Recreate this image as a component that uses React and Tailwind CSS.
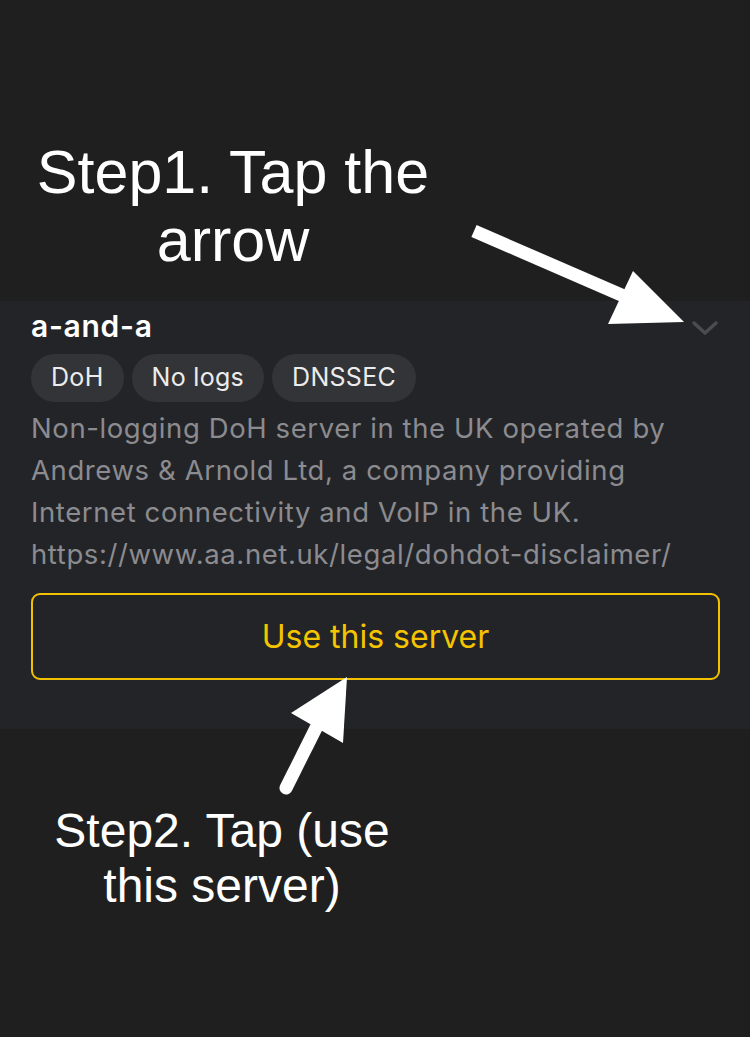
export default function App() {
  const tags = ['DoH', 'No logs', 'DNSSEC']

  return (
    <div className="relative w-[750px] h-[1037px] bg-[#1f1f1f] overflow-hidden font-['Inter',sans-serif]">
      {/* Step 1 annotation */}
      <div className="h-[301px] pt-[138px]">
        <div className="w-[466px] text-center text-white text-[61px] leading-[68px] font-['Liberation_Sans',Arial,sans-serif]">
          Step1. Tap the
          <br />
          arrow
        </div>
      </div>

      {/* Server card */}
      <div className="bg-[#232427] pl-[31px] pr-[30px] pt-[9px] pb-[49px]">
        <div className="flex items-center justify-between">
          <div className="text-white text-[30px] leading-[33px] font-semibold tracking-[0.7px]">a-and-a</div>
          <svg width="28" height="18" viewBox="0 0 28 18" className="mr-[1px] mt-[2px]">
            <path d="M3 4 L14 14 L25 4" fill="none" stroke="#4b4c50" strokeWidth="3.5" strokeLinecap="round" strokeLinejoin="round" />
          </svg>
        </div>

        <div className="flex gap-2 mt-[11px]">
          {tags.map((t) => (
            <span key={t} className="h-[48px] px-[20px] rounded-full bg-[#333437] text-[#ececec] text-[25px] tracking-[0.3px] flex items-center">
              {t}
            </span>
          ))}
        </div>

        <p className="mt-[5px] text-[#8b8b90] text-[27.5px] leading-[42px] tracking-[0.6px]">
          Non-logging DoH server in the UK operated by
          <br />
          Andrews &amp; Arnold Ltd, a company providing
          <br />
          Internet connectivity and VoIP in the UK.
          <br />
          https://www.aa.net.uk/legal/dohdot-disclaimer/
        </p>

        <button className="mt-[18px] w-[689px] h-[87px] rounded-[9px] border-2 border-[#f2c200] text-[#f5c400] text-[32px] flex items-center justify-center">
          Use this server
        </button>
      </div>

      {/* Step 2 annotation */}
      <div className="mt-[74px] w-[444px] text-center text-white text-[48px] leading-[55px] font-['Liberation_Sans',Arial,sans-serif]">
        Step2. Tap (use
        <br />
        this server)
      </div>

      {/* Arrows drawn over the content */}
      <svg className="absolute inset-0 pointer-events-none" width="750" height="1037" viewBox="0 0 750 1037">
        <line x1="474" y1="231" x2="626" y2="297" stroke="#fff" strokeWidth="13" />
        <polygon points="608,324 633,271 684,322" fill="#fff" />
        <line x1="318" y1="724" x2="286" y2="788" stroke="#fff" strokeWidth="13" strokeLinecap="round" />
        <polygon points="347,677 291,713 343,743" fill="#fff" />
      </svg>
    </div>
  )
}
